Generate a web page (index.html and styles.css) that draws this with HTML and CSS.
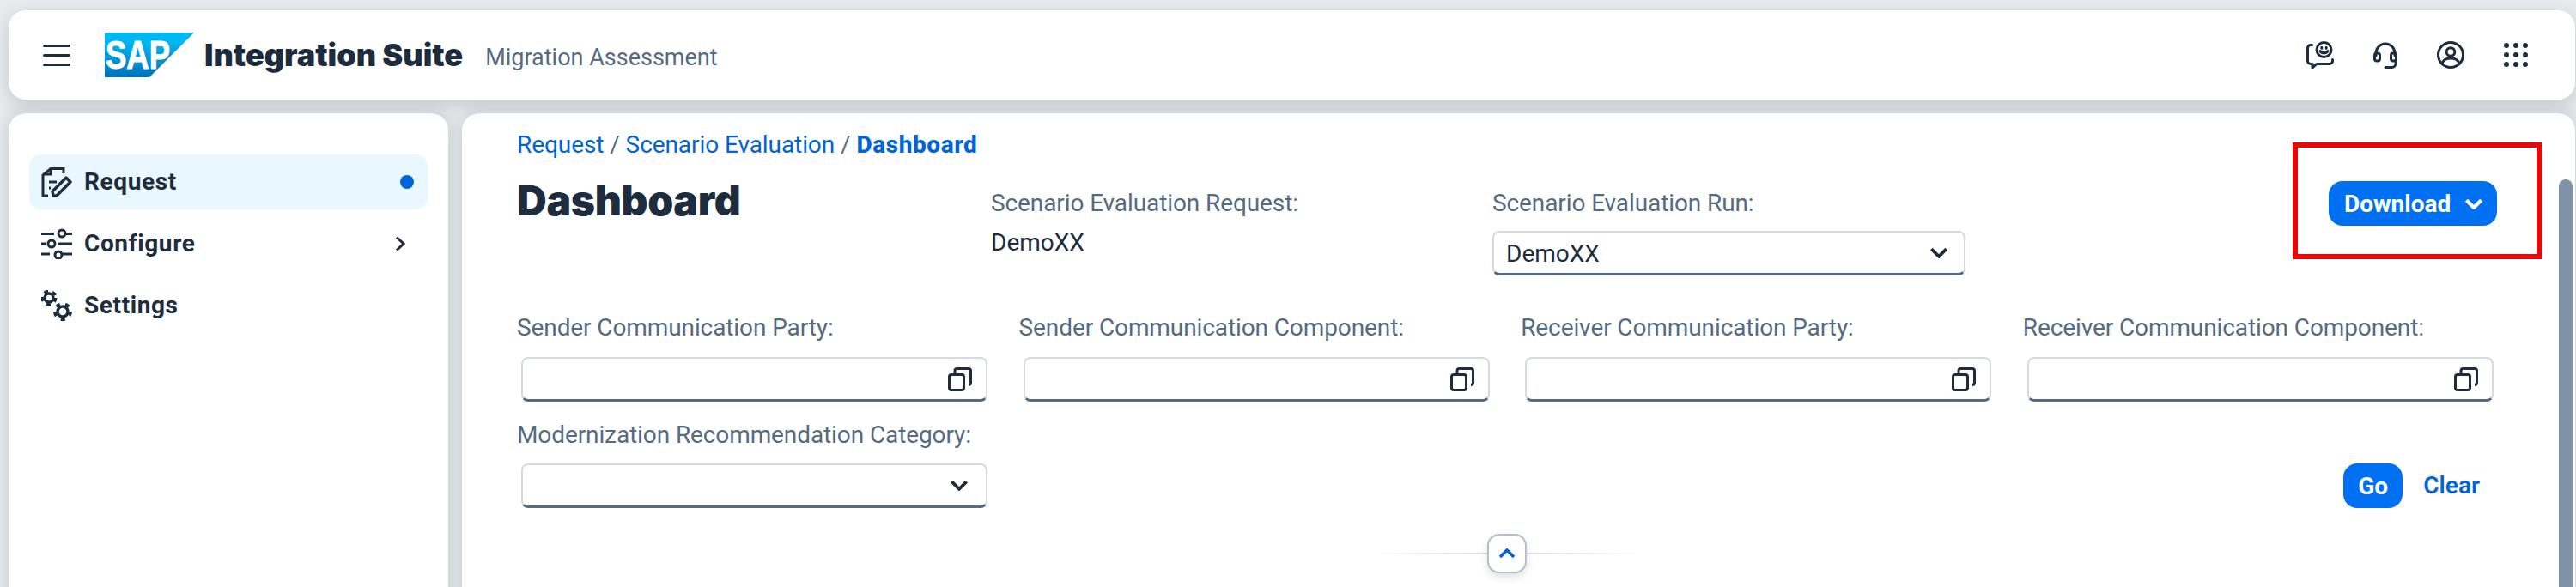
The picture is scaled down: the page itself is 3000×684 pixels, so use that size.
FILE: index.html
```html
<!DOCTYPE html>
<html lang="en">
<head>
<meta charset="utf-8">
<title>Integration Suite - Migration Assessment</title>
<link rel="stylesheet" href="styles.css">
</head>
<body>
<header class="shell">
  <button class="burger" aria-label="Menu"><span></span><span></span><span></span></button>
  <svg class="logo" viewBox="0 0 104 52" aria-label="SAP">
    <defs><linearGradient id="sapg" x1="0" y1="0" x2="0" y2="1"><stop offset="0" stop-color="#00b8f1"/><stop offset=".2" stop-color="#00b8f1"/><stop offset="1" stop-color="#0070b8"/></linearGradient></defs>
    <path d="M0 0H104L52 52H0Z" fill="url(#sapg)"/>
    <text class="logo-text" x="1" y="42" textLength="75" lengthAdjust="spacingAndGlyphs">SAP</text>
  </svg>
  <span class="product">Integration Suite</span>
  <span class="subtitle">Migration Assessment</span>
  <div class="shell-actions">
    <svg class="ic-chat" viewBox="0 0 32 32"><path d="M6.500 4.500H5A3.500 3.500 0 0 0 1.500 8v15A3.500 3.500 0 0 0 5 26.500h2V31l5-4.500h15a3.500 3.500 0 0 0 3.500-3.500v-1.500"/><circle cx="20.500" cy="10" r="8.500"/><path d="M16 11.500c1.500 3 7.500 3 9 0" /><path class="eyes" d="M17.800 7.200v1M23.200 7.200v1"/></svg>
    <svg class="ic-head" viewBox="0 0 28 32"><path d="M3 17V14a11 11 0 0 1 22 0v3"/><rect x="1.500" y="14" width="6" height="9" rx="2.500"/><rect x="20.500" y="14" width="6" height="9" rx="2.500"/><path d="M26 22v4a4.500 4.500 0 0 1-4.500 4.500H14"/></svg>
    <svg class="ic-user" viewBox="0 0 32 32"><circle cx="16" cy="16" r="14.500"/><circle cx="16" cy="12.500" r="4.800"/><path d="M6 26.500c1-5 4.500-6.500 10-6.500s9 1.500 10 6.500"/></svg>
    <svg class="ic-grid" viewBox="0 0 28 28"><circle cx="3" cy="3" r="3"/><circle cx="14" cy="3" r="3"/><circle cx="25" cy="3" r="3"/><circle cx="3" cy="14" r="3"/><circle cx="14" cy="14" r="3"/><circle cx="25" cy="14" r="3"/><circle cx="3" cy="25" r="3"/><circle cx="14" cy="25" r="3"/><circle cx="25" cy="25" r="3"/></svg>
  </div>
</header>

<div class="workspace">
  <nav class="sidenav">
    <a class="nav-item active">
      <svg class="nav-ic" viewBox="0 0 36 36"><path d="M26 8V2.500H11L2 10v24h6"/><path d="M11 2.500V9H4"/><path d="M9 18h9M9 25h2"/><path class="thick" d="M14 34l-1-5L29 13l5 5-16 16z"/></svg>
      <span class="nav-label">Request</span>
      <span class="nav-dot"></span>
    </a>
    <a class="nav-item">
      <svg class="nav-ic" viewBox="0 0 36 36"><path d="M0 6.500h15M29 6.500h7M0 18h6M20 18h16M0 30h10M25 30h11"/><circle cx="24" cy="6" r="4"/><circle cx="12" cy="18" r="4"/><circle cx="20" cy="31" r="4"/></svg>
      <span class="nav-label">Configure</span>
      <svg class="nav-chev" viewBox="0 0 12 18"><path d="M2 1.500l8 7.500-8 7.500"/></svg>
    </a>
    <a class="nav-item">
      <svg class="nav-ic" viewBox="0 0 36 36"><circle class="gear-teeth" cx="9" cy="9" r="7.500"/><circle class="gear-core" cx="9" cy="9" r="5"/><circle class="gear-teeth big" cx="25" cy="25" r="9"/><circle class="gear-core" cx="25" cy="25" r="6"/></svg>
      <span class="nav-label">Settings</span>
    </a>
  </nav>

  <main class="page">
    <div class="annotation"></div>
    <p class="crumbs"><a>Request</a> <span>/</span> <a>Scenario Evaluation</a> <span>/</span> <b>Dashboard</b></p>
    <div class="page-head">
      <h1>Dashboard</h1>
      <div class="meta meta-request">
        <label>Scenario Evaluation Request:</label>
        <div class="meta-value">DemoXX</div>
      </div>
      <div class="meta meta-run">
        <label>Scenario Evaluation Run:</label>
        <div class="control run-control">
          <span>DemoXX</span>
          <svg class="chev" viewBox="0 0 20 12"><path d="M2 2l8 8 8-8"/></svg>
        </div>
      </div>
      <button class="btn download">Download <svg viewBox="0 0 20 12"><path d="M2 2l8 8 8-8"/></svg></button>
    </div>

    <div class="filters">
      <div class="field">
        <label>Sender Communication Party:</label>
        <div class="control"><svg class="copy" viewBox="0 0 28 28"><rect x="1.500" y="8.500" width="17" height="18" rx="2.500"/><path d="M8 8V4a2.500 2.500 0 0 1 2.500-2.500H24A2.500 2.500 0 0 1 26.500 4v14a2.500 2.500 0 0 1-2.500 2.500"/></svg></div>
      </div>
      <div class="field">
        <label>Sender Communication Component:</label>
        <div class="control"><svg class="copy" viewBox="0 0 28 28"><rect x="1.500" y="8.500" width="17" height="18" rx="2.500"/><path d="M8 8V4a2.500 2.500 0 0 1 2.500-2.500H24A2.500 2.500 0 0 1 26.500 4v14a2.500 2.500 0 0 1-2.500 2.500"/></svg></div>
      </div>
      <div class="field">
        <label>Receiver Communication Party:</label>
        <div class="control"><svg class="copy" viewBox="0 0 28 28"><rect x="1.500" y="8.500" width="17" height="18" rx="2.500"/><path d="M8 8V4a2.500 2.500 0 0 1 2.500-2.500H24A2.500 2.500 0 0 1 26.500 4v14a2.500 2.500 0 0 1-2.500 2.500"/></svg></div>
      </div>
      <div class="field">
        <label>Receiver Communication Component:</label>
        <div class="control"><svg class="copy" viewBox="0 0 28 28"><rect x="1.500" y="8.500" width="17" height="18" rx="2.500"/><path d="M8 8V4a2.500 2.500 0 0 1 2.500-2.500H24A2.500 2.500 0 0 1 26.500 4v14a2.500 2.500 0 0 1-2.500 2.500"/></svg></div>
      </div>
      <div class="field field-category">
        <label>Modernization Recommendation Category:</label>
        <div class="control"><svg class="chev" viewBox="0 0 20 12"><path d="M2 2l8 8 8-8"/></svg></div>
      </div>
      <div class="filter-actions">
        <button class="btn go">Go</button>
        <a class="clear">Clear</a>
      </div>
    </div>

    <div class="collapse-row">
      <span class="rule rule-left"></span>
      <button class="collapse" aria-label="Collapse"><svg viewBox="0 0 20 12"><path d="M2 10l8-8 8 8"/></svg></button>
      <span class="rule rule-right"></span>
    </div>

    <div class="scrollbar"></div>
  </main>
</div>
</body>
</html>
```
FILE: styles.css
```css
* { box-sizing: border-box; }
html, body { height: 684px; overflow: hidden; }
body {
  margin: 0;
  padding: 12px 1px 0 10px;
  background: #e9ebee;
  color: #1d2d3e;
  font-family: Roboto, "Noto Sans", sans-serif;
  font-size: 28px;
}
button { font-family: inherit; border: 0; padding: 0; background: none; }
svg { display: block; fill: none; }

.shell {
  display: flex;
  align-items: center;
  height: 104px;
  padding: 0 40px;
  background: #fff;
  border-radius: 20px;
  box-shadow: 0 6px 20px rgba(29, 45, 62, .18);
  position: relative;
  z-index: 1;
}
.burger { display: flex; flex-direction: column; gap: 8px; width: 32px; }
.burger span { height: 3px; border-radius: 2px; background: #1d2d3e; }
.logo { width: 104px; height: 52px; margin-left: 40px; }
.logo-text { font: 900 46px "Liberation Sans", sans-serif; fill: #fff; stroke: #fff; stroke-width: 1; }
.product { margin-left: 12px; font-family: Inter, Roboto, sans-serif; font-size: 36px; font-weight: 900; line-height: 44px; }
.subtitle { margin-left: 26px; font-size: 27px; color: #556b82; line-height: 44px; padding-top: 5px; }
.shell-actions { margin-left: auto; margin-right: 15px; display: flex; align-items: center; }
.shell-actions svg { stroke: #1d2d3e; stroke-width: 3; stroke-linecap: round; stroke-linejoin: round; }
.ic-chat { width: 32px; height: 32px; }
.ic-head { width: 28px; height: 32px; margin-left: 46px; }
.ic-user { width: 32px; height: 32px; margin-left: 46px; }
.shell-actions .ic-grid { width: 28px; height: 28px; margin-left: 46px; fill: #1d2d3e; stroke: none; }

.workspace { display: flex; gap: 16px; margin-top: 16px; height: 700px; }

.sidenav {
  flex: 0 0 512px;
  display: flex;
  flex-direction: column;
  gap: 8px;
  padding: 48px 24px 0;
  background: #fff;
  border-radius: 20px;
  box-shadow: 0 0 20px rgba(29, 45, 62, .18);
}
.nav-item {
  display: flex;
  align-items: center;
  gap: 14px;
  height: 64px;
  padding: 0 16px 0 14px;
  border-radius: 14px;
  font-weight: 700;
  letter-spacing: .6px;
}
.nav-item.active { background: #e9f7ff; }
.nav-ic { flex: none; width: 36px; height: 36px; stroke: #1d2d3e; stroke-width: 3; }
.nav-ic .thick { stroke-width: 3.500; stroke-linejoin: round; }
.gear-teeth { stroke-width: 4; stroke-dasharray: 4.800 5; }
.gear-teeth.big { stroke-width: 4; stroke-dasharray: 5 6.300; }
.gear-core { stroke-width: 3.500; }
.nav-label { flex: 1; padding-bottom: 2px; }
.nav-dot { width: 16px; height: 16px; border-radius: 50%; background: #0064d9; }
.nav-chev { width: 12px; height: 18px; margin-right: 10px; stroke: #1d2d3e; stroke-width: 3; }

.page {
  flex: 1;
  position: relative;
  padding: 19px 91px 0 64px;
  background: #fff;
  border-radius: 20px;
  box-shadow: 0 0 20px rgba(29, 45, 62, .18);
}
.annotation {
  position: absolute;
  top: 34px;
  right: 39px;
  width: 290px;
  height: 136px;
  border: 6px solid #e80808;
}
.scrollbar {
  position: absolute;
  top: 77px;
  right: 3px;
  bottom: 0;
  width: 16px;
  border-radius: 8px;
  background: #7f93a8;
}
.crumbs { margin: 0; line-height: 36px; color: #556b82; letter-spacing: -.08px; }
.crumbs a { color: #0064d9; }
.crumbs b { color: #0064d9; font-weight: 800; letter-spacing: .6px; }

.page-head { display: flex; align-items: flex-start; height: 134px; padding-top: 19px; }
h1 { flex: 0 0 552px; margin: 0; font-family: Inter, Roboto, sans-serif; font-size: 48px; line-height: 56px; font-weight: 900; letter-spacing: -.3px; }
label { display: block; line-height: 36px; color: #556b82; letter-spacing: -.1px; }
.meta { margin-top: 13px; }
.meta-request { flex: 0 0 584px; }
.meta-value { margin-top: 10px; line-height: 36px; }
.meta-run { flex: 0 0 551px; }
.control {
  display: flex;
  align-items: center;
  justify-content: flex-end;
  height: 52px;
  padding: 0 16px 0 14px;
  background: #fff;
  border: 2px solid #d5dadd;
  border-bottom: 3px solid #556b82;
  border-radius: 8px;
}
.run-control { margin-top: 14px; justify-content: space-between; padding-right: 18px; }
.run-control span { padding-top: 2px; }
.btn {
  height: 52px;
  background: #0070f2;
  color: #fff;
  border-radius: 16px;
  font-size: 28px;
  font-weight: 700;
}
.download {
  display: flex;
  align-items: center;
  gap: 16px;
  width: 196px;
  margin-left: auto;
  margin-top: 5px;
  padding-left: 18px;
}
.download svg { width: 22px; height: 13px; stroke: #fff; stroke-width: 4; }

.filters {
  display: grid;
  grid-template-columns: repeat(3, 584.600px) 1fr;
  row-gap: 21px;
  margin-top: 43px;
}
.field .control { width: 543px; margin: 16px 0 0 5px; }
.field-category .control { margin-top: 15px; }
.chev { width: 22px; height: 13px; stroke: #1d2d3e; stroke-width: 3.500; }
.copy { width: 28px; height: 28px; stroke: #1d2d3e; stroke-width: 3; }
.field .control .chev { margin-right: 4px; }
.filter-actions { grid-column: 4; display: flex; align-items: flex-end; justify-content: flex-end; gap: 24px; padding-right: 20px; }
.go { width: 69px; }
.clear { line-height: 52px; color: #0064d9; font-weight: 600; }

.collapse-row { display: flex; align-items: center; justify-content: center; margin-top: 30px; }
.rule { width: 130px; height: 2px; }
.rule-left { background: linear-gradient(to right, rgba(213, 218, 221, 0), #d5dadd); }
.rule-right { background: linear-gradient(to left, rgba(213, 218, 221, 0), #d5dadd); }
.collapse {
  display: flex;
  align-items: center;
  justify-content: center;
  width: 46px;
  height: 46px;
  background: #fff;
  border: 2px solid #b4bfcb;
  border-radius: 14px;
  box-shadow: 0 4px 10px rgba(29, 45, 62, .15);
}
.collapse svg { width: 20px; height: 12px; stroke: #0064d9; stroke-width: 3.500; }
```
